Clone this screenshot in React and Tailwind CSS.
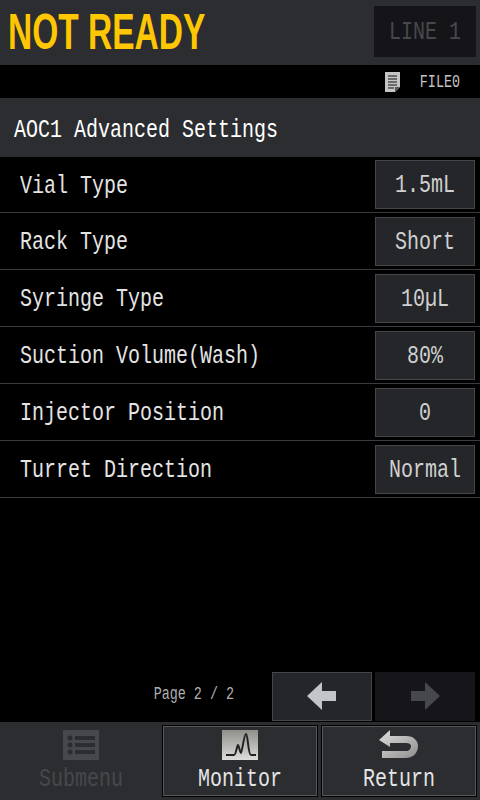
import React from "react";

const rows = [
    ["Vial Type", "1.5mL"],
    ["Rack Type", "Short"],
    ["Syringe Type", "10µL"],
    ["Suction Volume(Wash)", "80%"],
    ["Injector Position", "0"],
    ["Turret Direction", "Normal"],
];

const big = "inline-block text-[20px] leading-[24px] scale-y-[1.3] whitespace-pre";
const small = "inline-block text-[13.4px] leading-[18px] scale-y-[1.35] whitespace-pre";

const SettingRow = ({ label, value }) => (
    <div className="h-[57px] first:h-[56px] flex items-center justify-between pl-[20px] pr-[5px] border-b border-[#3a3b3e]">
        <span className={`${big} text-[#e4e4e4] mt-[4px]`}>{label}</span>
        <div className="w-[100px] h-[49px] flex items-center justify-center bg-[#25262a] border border-[#44464a] text-[#d0d0d0]">
            <span className={`${big} mt-[3px]`}>{value}</span>
        </div>
    </div>
);

const DocIcon = () => (
    <svg width="16" height="20" viewBox="0 0 16 20">
        <path d="M0 0H15V15L10 20H0Z" fill="#c4c4c4" />
        <path d="M15 15L10 20V15Z" fill="#55565a" />
        <path d="M3 4H12M3 7H12M3 10H12M3 13H12M3 16H9" stroke="#111" strokeWidth="1" />
    </svg>
);

const LeftArrow = ({ color }) => (
    <svg width="30" height="28" viewBox="0 0 30 28">
        <path d="M0 14L15 0V9H29V19H15V28Z" fill={color} />
    </svg>
);

const RightArrow = ({ color }) => (
    <svg width="30" height="28" viewBox="0 0 30 28">
        <path d="M30 14L15 0V9H1V19H15V28Z" fill={color} />
    </svg>
);

const ListIcon = () => (
    <svg width="36" height="30" viewBox="0 0 36 30">
        <rect width="36" height="30" fill="#47484c" />
        <g fill="#2b2d31">
            <circle cx="7" cy="8" r="2.5" />
            <circle cx="7" cy="15" r="2.5" />
            <circle cx="7" cy="22" r="2.5" />
            <rect x="12" y="6" width="20" height="4" />
            <rect x="12" y="13" width="20" height="4" />
            <rect x="12" y="20" width="20" height="4" />
        </g>
    </svg>
);

const MonitorIcon = () => (
    <svg width="36" height="30" viewBox="0 0 36 30">
        <defs>
            <linearGradient id="monitorBg" x1="0" y1="0" x2="0" y2="1">
                <stop offset="0" stopColor="#8f908c" />
                <stop offset="1" stopColor="#dcdcd8" />
            </linearGradient>
        </defs>
        <rect width="36" height="30" fill="url(#monitorBg)" />
        <path d="M4 25H12C14 25 15 15 16 15C17 15 18 23 19 23C20 23 22 4 24 4C26 4 26 25 29 25H34" fill="none" stroke="#222" strokeWidth="2" />
    </svg>
);

const ReturnIcon = () => (
    <svg width="40" height="29" viewBox="0 0 40 29">
        <defs>
            <linearGradient id="returnFill" x1="0" y1="0" x2="1" y2="1">
                <stop offset="0" stopColor="#e0e0e0" />
                <stop offset="1" stopColor="#8e8e8e" />
            </linearGradient>
        </defs>
        <path d="M0 10L11 0V6H27C35 6 39 11 39 16C39 23 34 28 27 28H3V21H27C30 21 32 19 32 16C32 14 30 13 27 13H11V17Z" fill="url(#returnFill)" />
    </svg>
);

const App = () => {
    return (
        <div className="w-[480px] h-[800px] bg-black flex flex-col overflow-hidden font-['Liberation_Mono',monospace]">
            {/* header */}
            <div className="h-[65px] shrink-0 bg-[#2b2d31] flex items-center justify-between pl-[8px] pr-[4px]">
                <span className="text-[50px] leading-[50px] font-bold text-[#ffc603] font-['Liberation_Sans',sans-serif] whitespace-pre origin-left scale-x-[0.67] w-[196px] -mt-[1px]">
                    NOT READY
                </span>
                <div className="w-[102px] h-[51px] -mt-[3px] flex items-center justify-center bg-[#151519] text-[#47484c]">
                    <span className={`${big} mt-[2px]`}>LINE 1</span>
                </div>
            </div>

            {/* file bar */}
            <div className="h-[33px] shrink-0 flex items-center justify-end gap-[19px] pr-[20px]">
                <DocIcon />
                <span className={`${small} text-[#c4c4c4] mt-[2px]`}>FILE0</span>
            </div>

            {/* title */}
            <div className="h-[59px] shrink-0 bg-[#2b2d31] flex items-center pl-[14px] text-white">
                <span className={`${big} mt-[5px]`}>AOC1 Advanced Settings</span>
            </div>

            {/* settings */}
            <div className="flex-1">
                {rows.map(([label, value]) => (
                    <SettingRow key={label} label={label} value={value} />
                ))}
            </div>

            {/* paging */}
            <div className="h-[50px] shrink-0 flex items-center justify-end gap-[3px] pr-[5px]">
                <span className={`${small} text-[#b0b0b0] mr-[35px] -mt-[2px]`}>Page 2 / 2</span>
                <div className="w-[100px] h-[49px] flex items-center justify-center bg-[#25262a] border border-[#44464a]">
                    <LeftArrow color="#c4c5c8" />
                </div>
                <div className="w-[100px] h-[49px] flex items-center justify-center bg-[#16161a]">
                    <RightArrow color="#47484c" />
                </div>
            </div>

            {/* footer */}
            <div className="h-[78px] shrink-0 mt-[1px] bg-[#2b2d31] grid grid-cols-[156px_156px_156px] gap-[3px] pl-[3px] pt-[3px]">
                <div className="h-[72px] flex flex-col items-center pt-[5px] text-[#47484c]">
                    <ListIcon />
                    <span className={`${big} mt-[7px]`}>Submenu</span>
                </div>
                <div className="h-[72px] flex flex-col items-center pt-[4px] border border-black shadow-[inset_0_0_0_1px_#55575b] text-[#e4e4e4]">
                    <MonitorIcon />
                    <span className={`${big} mt-[7px]`}>Monitor</span>
                </div>
                <div className="h-[72px] flex flex-col items-center pt-[4px] border border-black shadow-[inset_0_0_0_1px_#55575b] text-[#e4e4e4]">
                    <ReturnIcon />
                    <span className={`${big} mt-[8px]`}>Return</span>
                </div>
            </div>
        </div>
    );
};

export default App;
